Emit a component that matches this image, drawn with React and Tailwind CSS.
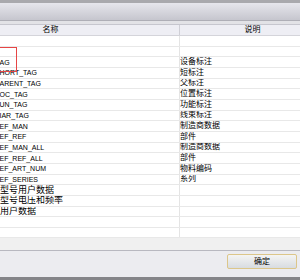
import React from "react";

// list is scrolled sideways, so only the visible tail of each name shows
const ROWS = [
  ["", ""],
  ["", ""],
  ["AG", "设备标注"],
  ["HORT_TAG", "短标注"],
  ["ARENT_TAG", "父标注"],
  ["OC_TAG", "位置标注"],
  ["UN_TAG", "功能标注"],
  ["IAR_TAG", "线束标注"],
  ["EF_MAN", "制造商数据"],
  ["EF_REF", "部件"],
  ["EF_MAN_ALL", "制造商数据"],
  ["EF_REF_ALL", "部件"],
  ["EF_ART_NUM", "物料编码"],
  ["EF_SERIES", "系列"],
  ["型号用户数据", ""],
  ["型号电压和频率", ""],
  ["用户数据", ""],
  ["", ""],
  ["", ""]
];

const isCjk = (s) => /[\u4e00-\u9fff]/.test(s);

const Row = ({ name, desc }) => (
  <div className="flex h-[10.67px] shrink-0 border-b border-[#e8e8e8]">
    <div className="w-[180px] shrink-0 flex items-center overflow-hidden border-r border-[#e4e4e4]">
      {name &&
        (isCjk(name) ? (
          <span className="whitespace-nowrap text-[9px] leading-none">{name}</span>
        ) : (
          <span className="ml-[-0.5px] whitespace-nowrap text-[7px] leading-none">{name}</span>
        ))}
    </div>
    <div className="flex-1 flex items-center overflow-hidden">
      <span className="whitespace-nowrap text-[8px] leading-none">{desc}</span>
    </div>
  </div>
);

export default function App() {
  return (
    <div
      className="relative w-[300px] h-[280px] overflow-hidden flex flex-col bg-white text-black"
      style={{ fontFamily: '"Liberation Sans", "Noto Sans CJK SC", sans-serif' }}
    >
      {/* title strip */}
      <div className="h-[3px] shrink-0 bg-[#a9a9ad]" />
      <div className="h-[17px] shrink-0 bg-gradient-to-b from-[#e6e6ec] to-[#c6c6ce]" />
      <div className="h-px shrink-0 bg-[#aeaeb6]" />
      <div className="h-[3px] shrink-0 bg-[#e2e2e6]" />
      <div className="h-px shrink-0 bg-[#c6c6ce]" />

      {/* list header */}
      <div className="flex h-[11px] shrink-0 bg-[#eeeef4] border-b border-[#d4d4da]">
        <div className="w-[180px] shrink-0 flex overflow-hidden border-r border-[#cfcfd6]">
          <div className="ml-[-78px] w-[257px] shrink-0 flex items-center justify-center text-[8px] leading-none">
            名称
          </div>
        </div>
        <div className="w-[145px] shrink-0 flex items-center justify-center text-[8px] leading-none">
          说明
        </div>
      </div>

      {/* rows */}
      <div className="flex flex-col shrink-0">
        {ROWS.map(([name, desc], i) => (
          <Row key={i} name={name} desc={desc} />
        ))}
      </div>

      <div className="flex-1 bg-[#f0f0f0]" />
      <div className="h-px shrink-0 bg-[#b8b8c0]" />

      {/* button panel */}
      <div className="h-[26px] shrink-0 bg-[#ececf0] flex justify-end items-start pt-[3px] pr-[3px]">
        <button className="w-[70px] h-[15px] rounded-[2px] border border-[#dcc68a] bg-gradient-to-b from-[#f4f4f4] to-[#d8dce0] flex items-center justify-center text-[8px] leading-none">
          确定
        </button>
      </div>
      <div className="h-[3px] shrink-0 bg-[#858589]" />

      {/* red annotation box */}
      <div className="absolute left-[-2px] top-[47px] w-[19px] h-[25px] border-[1.5px] border-[#e64545]" />
    </div>
  );
}
